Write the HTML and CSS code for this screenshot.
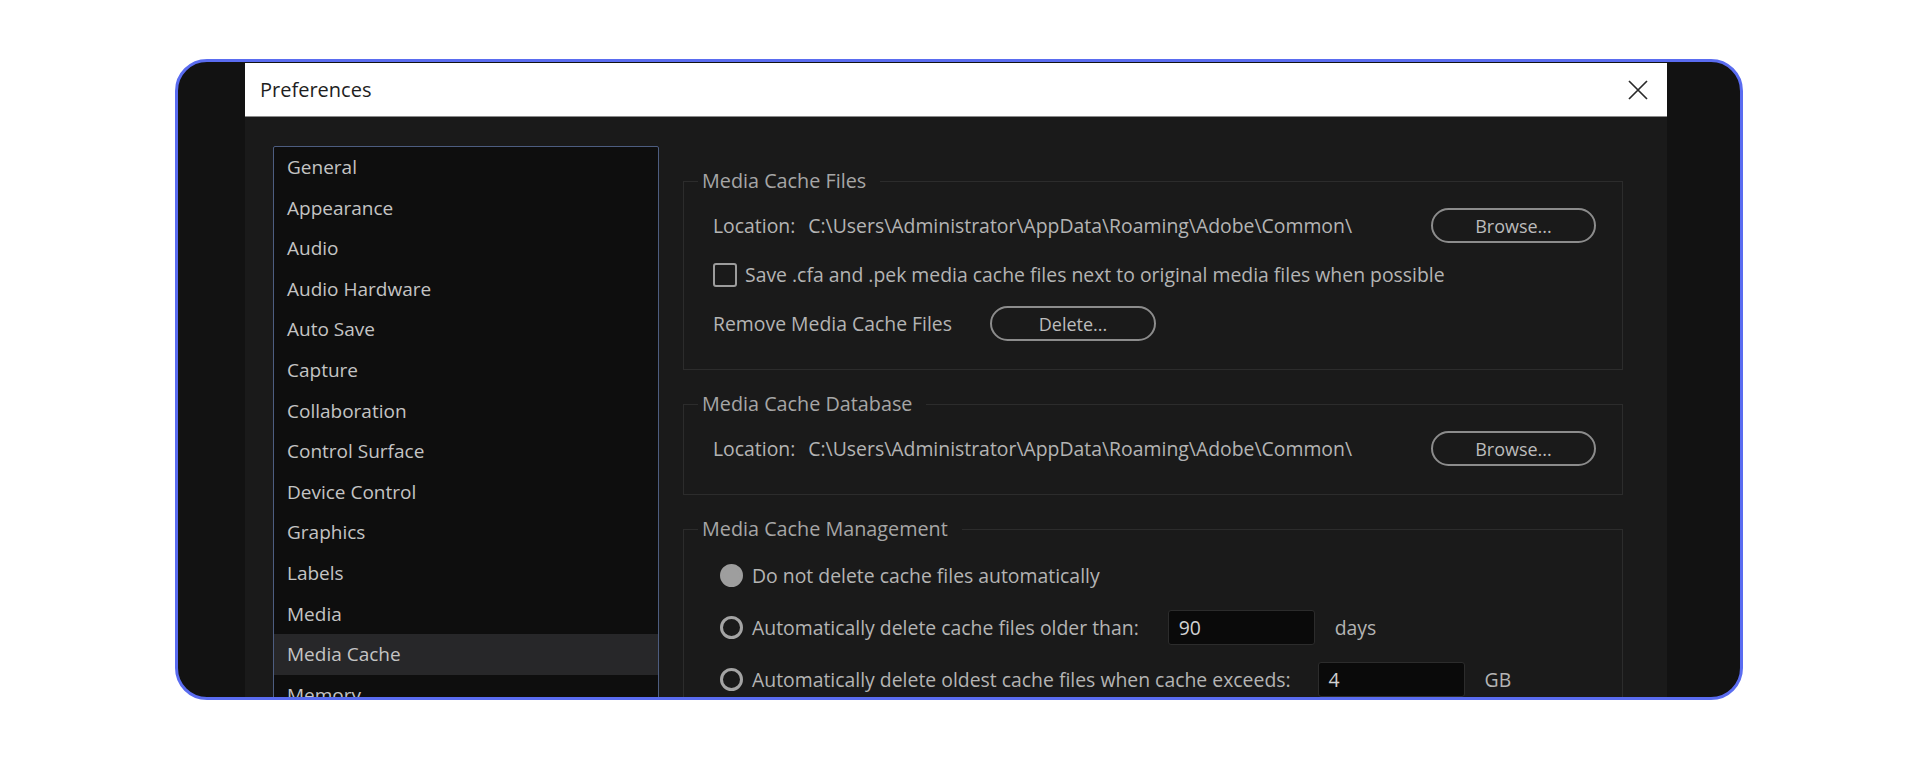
FILE: index.html
```html
<!DOCTYPE html>
<html lang="en">
<head>
    <meta charset="UTF-8">
    <title>Preferences</title>
    <link rel="stylesheet" href="styles.css">
</head>
<body>
    <div class="frame">
        <div class="dialog">
            <div class="titlebar">
                <span class="title">Preferences</span>
                <svg class="close" width="20" height="20" viewBox="0 0 20 20">
                    <path d="M1 1 L19 19 M19 1 L1 19" stroke="#2a2a2a" stroke-width="1.7" fill="none"/>
                </svg>
            </div>
            <div class="dialog-body">
                <ul class="nav">
                    <li>General</li>
                    <li>Appearance</li>
                    <li>Audio</li>
                    <li>Audio Hardware</li>
                    <li>Auto Save</li>
                    <li>Capture</li>
                    <li>Collaboration</li>
                    <li>Control Surface</li>
                    <li>Device Control</li>
                    <li>Graphics</li>
                    <li>Labels</li>
                    <li>Media</li>
                    <li class="active">Media Cache</li>
                    <li>Memory</li>
                </ul>

                <div class="panel">
                    <fieldset class="group">
                        <legend>Media Cache Files</legend>
                        <div class="row">
                            <span class="label">Location:</span>
                            <span class="path">C:\Users\Administrator\AppData\Roaming\Adobe\Common\</span>
                            <button class="btn btn-browse">Browse...</button>
                        </div>
                        <div class="row">
                            <span class="checkbox"></span>
                            <span>Save .cfa and .pek media cache files next to original media files when possible</span>
                        </div>
                        <div class="row">
                            <span>Remove Media Cache Files</span>
                            <button class="btn btn-delete">Delete...</button>
                        </div>
                    </fieldset>

                    <fieldset class="group">
                        <legend>Media Cache Database</legend>
                        <div class="row">
                            <span class="label">Location:</span>
                            <span class="path">C:\Users\Administrator\AppData\Roaming\Adobe\Common\</span>
                            <button class="btn btn-browse">Browse...</button>
                        </div>
                    </fieldset>

                    <fieldset class="group group-manage">
                        <legend>Media Cache Management</legend>
                        <div class="row">
                            <span class="radio checked"></span>
                            <span>Do not delete cache files automatically</span>
                        </div>
                        <div class="row">
                            <span class="radio"></span>
                            <span>Automatically delete cache files older than:</span>
                            <span class="field field-days">90</span>
                            <span class="unit">days</span>
                        </div>
                        <div class="row">
                            <span class="radio"></span>
                            <span>Automatically delete oldest cache files when cache exceeds:</span>
                            <span class="field field-size">4</span>
                            <span class="unit">GB</span>
                        </div>
                    </fieldset>
                </div>
            </div>
        </div>
    </div>
</body>
</html>
```

FILE: styles.css
```css
/* styles.css */
body {
    margin: 0;
    background-color: #ffffff;
    font-family: "Open Sans", "Noto Sans", sans-serif;
}

.frame {
    box-sizing: border-box;
    width: 1568px;
    height: 641px;
    margin: 59px 0 0 175px;
    border: 3px solid #5a6cf0;
    border-radius: 32px;
    background-color: #121212;
    overflow: hidden;
}

.dialog {
    width: 1422px;
    height: 100%;
    margin: 1px 0 0 67px;
    display: flex;
    flex-direction: column;
    background-color: #1a1a1a;
}

.titlebar {
    box-sizing: border-box;
    height: 54px;
    flex-shrink: 0;
    display: flex;
    align-items: center;
    justify-content: space-between;
    padding: 0 19px 0 15px;
    background-color: #ffffff;
    border-bottom: 1px solid #8a8a8a;
}

.title {
    font-size: 20px;
    color: #1e1e1e;
}

.dialog-body {
    flex: 1;
    display: flex;
    gap: 24px;
    padding: 29px 44px 0 28px;
    min-height: 0;
}

.nav {
    box-sizing: border-box;
    width: 386px;
    flex-shrink: 0;
    margin: 0;
    padding: 0;
    list-style: none;
    background-color: #0e0e0e;
    border: 1px solid #4d5d80;
    border-radius: 2px;
    align-self: flex-start;
}

.nav li {
    height: 40.6px;
    line-height: 40.6px;
    padding-left: 13px;
    font-size: 19px;
    color: #c4c4c4;
}

.nav li.active {
    background-color: #272729;
}

.panel {
    flex: 1;
    padding-top: 23px;
    font-size: 19.4px;
    color: #b4b4b4;
}

.group {
    margin: 0 0 22px 0;
    padding: 15px 26px 28px 29px;
    border: 1px solid #2c2c2c;
}

.group legend {
    margin-left: -15px;
    padding: 0 14px 0 4px;
    line-height: 24px;
    font-size: 19.8px;
    color: #a6a6a6;
}

.group-manage {
    padding-top: 17px;
    padding-left: 36px;
}

.group-manage legend {
    margin-left: -22px;
}

.row {
    height: 35px;
    display: flex;
    align-items: center;
    white-space: nowrap;
}

.row + .row {
    margin-top: 14px;
}

.group-manage .row + .row {
    margin-top: 17px;
}

.label {
    margin-right: 13px;
}

.btn {
    box-sizing: border-box;
    height: 35px;
    border: 2px solid #8c8c8c;
    border-radius: 18px;
    background: transparent;
    color: #bcbcbc;
    font-family: inherit;
    font-size: 18px;
    padding: 0;
}

.btn-browse {
    width: 165px;
    margin-left: auto;
}

.btn-delete {
    width: 166px;
    margin-left: 38px;
}

.checkbox {
    box-sizing: border-box;
    width: 24px;
    height: 24px;
    margin-right: 8px;
    border: 2px solid #9c9c9c;
    border-radius: 3px;
}

.radio {
    box-sizing: border-box;
    width: 23px;
    height: 23px;
    margin-right: 9px;
    border: 3px solid #a4a4a4;
    border-radius: 50%;
}

.radio.checked {
    background-color: #9e9e9e;
    border-color: #9e9e9e;
}

.field {
    box-sizing: border-box;
    width: 147px;
    height: 35px;
    line-height: 33px;
    padding-left: 10px;
    background-color: #0a0a0a;
    border: 1px solid #2c2c2c;
    border-radius: 3px;
    color: #d2d2d2;
}

.field-days {
    margin-left: 29px;
}

.field-size {
    margin-left: 27px;
}

.unit {
    margin-left: 20px;
}
```
